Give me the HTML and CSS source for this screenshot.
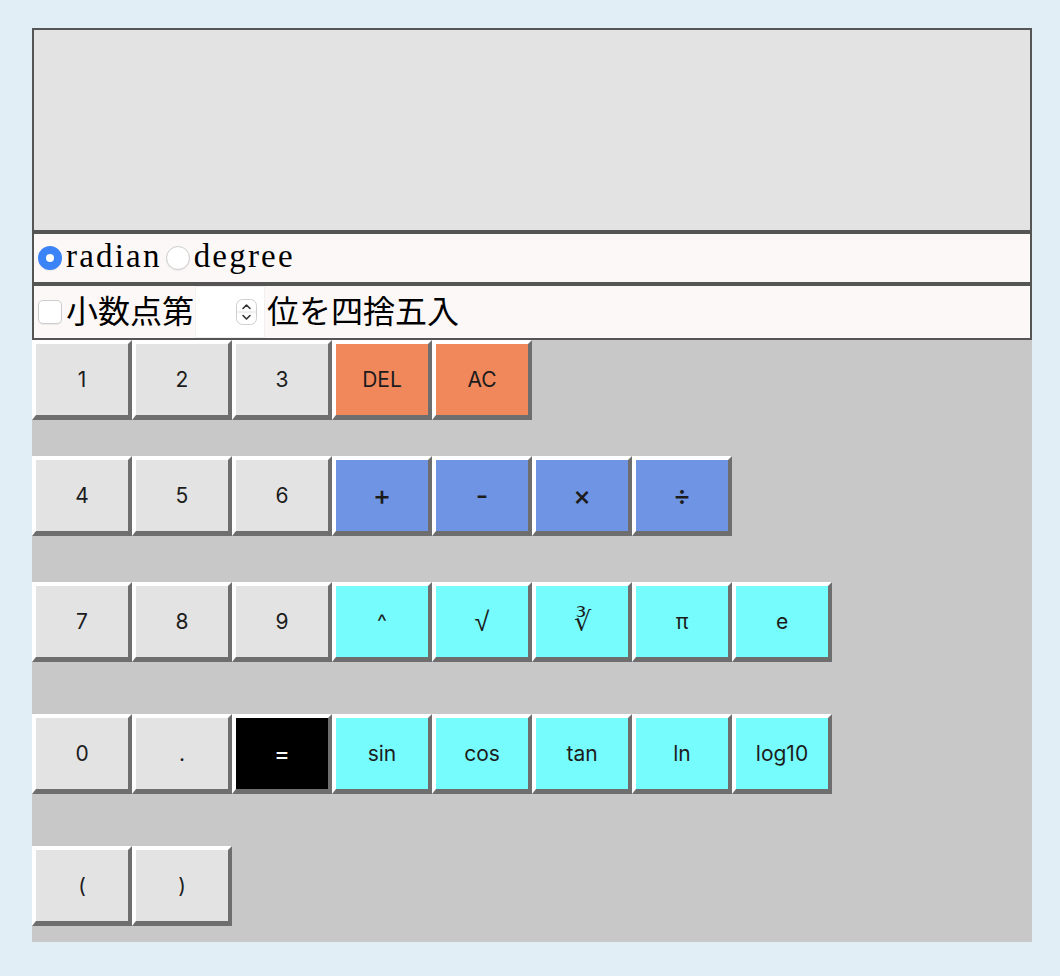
FILE: index.html
```html
<!DOCTYPE html>
<html lang="ja">
<head>
<meta charset="utf-8">
<title>関数電卓</title>
<link rel="stylesheet" href="styles.css">
</head>
<body>
<div class="calc">
  <div class="display"></div>
  <div class="opt-row mode">
    <label class="opt"><input type="radio" name="mode" class="radio" checked><span class="lt">radian</span></label>
    <label class="opt"><input type="radio" name="mode" class="radio"><span class="lt">degree</span></label>
  </div>
  <div class="opt-row round">
    <input type="checkbox" class="check">
    <span class="jp">小数点第</span>
    <span class="num">
      <input type="text" class="num-field" aria-label="桁数">
      <svg class="spin" width="21" height="26" viewBox="0 0 21 26">
        <rect x="0.5" y="0.5" width="20" height="25" rx="6" fill="#fff" stroke="#cfcfcf"/>
        <line x1="1" y1="13" x2="20" y2="13" stroke="#e2e2e2"/>
        <path d="M7 9.5 L10.5 6 L14 9.5" fill="none" stroke="#333" stroke-width="1.6" stroke-linecap="round" stroke-linejoin="round"/>
        <path d="M7 16.5 L10.5 20 L14 16.5" fill="none" stroke="#333" stroke-width="1.6" stroke-linecap="round" stroke-linejoin="round"/>
      </svg>
    </span>
    <span class="jp">位を四捨五入</span>
  </div>
  <div class="keys">
    <div class="key-row r1">
      <button class="key num-key">1</button><button class="key num-key">2</button><button class="key num-key">3</button><button class="key del">DEL</button><button class="key del">AC</button>
    </div>
    <div class="key-row r2">
      <button class="key num-key">4</button><button class="key num-key">5</button><button class="key num-key">6</button><button class="key op">+</button><button class="key op">-</button><button class="key op">×</button><button class="key op">÷</button>
    </div>
    <div class="key-row r3">
      <button class="key num-key">7</button><button class="key num-key">8</button><button class="key num-key">9</button><button class="key fn">^</button><button class="key fn sym">√</button><button class="key fn sym">∛</button><button class="key fn">π</button><button class="key fn">e</button>
    </div>
    <div class="key-row r4">
      <button class="key num-key">0</button><button class="key num-key">.</button><button class="key eq">=</button><button class="key fn">sin</button><button class="key fn">cos</button><button class="key fn">tan</button><button class="key fn">ln</button><button class="key fn">log10</button>
    </div>
    <div class="key-row r5">
      <button class="key num-key">(</button><button class="key num-key">)</button>
    </div>
  </div>
</div>
</body>
</html>
```

FILE: styles.css
```css
html, body {
  margin: 0;
  padding: 0;
  background: #e1eef6;
}

body {
  padding: 28px 28px 34px 32px;
  font-family: "Liberation Serif", "Noto Sans CJK JP", serif;
}

.calc {
  width: 1000px;
}

.display {
  box-sizing: border-box;
  height: 204px;
  border: 2px solid #555555;
  background: #e3e3e3;
}

.opt-row {
  box-sizing: border-box;
  display: flex;
  align-items: center;
  border: 2px solid #555555;
  background: #fcf8f7;
  font-size: 33px;
  color: #000;
}

.mode {
  height: 52px;
}

.round {
  height: 56px;
}

.opt {
  display: flex;
  align-items: center;
}

.lt {
  letter-spacing: 2.2px;
  position: relative;
  top: -2px;
}

.radio {
  appearance: none;
  -webkit-appearance: none;
  box-sizing: border-box;
  width: 24px;
  height: 24px;
  margin: 0 4px 0 4px;
  border-radius: 50%;
  border: 1px solid #cdcdcd;
  background: #ffffff;
  box-shadow: 0 1px 1px rgba(0,0,0,0.06);
}

.radio:checked {
  border: 8px solid #3b83f6;
  background: #ffffff;
}

.opt + .opt .radio {
  margin-left: 4px;
}

.check {
  appearance: none;
  -webkit-appearance: none;
  box-sizing: border-box;
  width: 24px;
  height: 24px;
  margin: 0 4px 0 4px;
  border-radius: 5px;
  border: 1px solid #cdcdcd;
  background: #ffffff;
  box-shadow: 0 1px 1px rgba(0,0,0,0.06);
}

.jp {
  font-family: "Noto Sans CJK JP", sans-serif;
  font-size: 32px;
  font-weight: 400;
  line-height: 1;
  position: relative;
  top: -3px;
}

.num {
  box-sizing: border-box;
  display: flex;
  align-items: center;
  width: 70px;
  height: 52px;
  margin: 0 2px 0 1px;
  background: #ffffff;
  border: 1px solid #f1efef;
}

.num-field {
  flex: 1;
  min-width: 0;
  height: 100%;
  border: none;
  padding: 0;
  outline: none;
  background: transparent;
  font-size: 20px;
}

.spin {
  display: block;
  margin-right: 7px;
}

.keys {
  background: #c8c8c8;
  padding-bottom: 16px;
}

.key-row {
  display: flex;
}

.r2 { margin-top: 36px; }
.r3 { margin-top: 46px; }
.r4 { margin-top: 52px; }
.r5 { margin-top: 52px; }

.key {
  box-sizing: border-box;
  width: 100px;
  height: 80px;
  margin: 0;
  padding: 0;
  border-style: solid;
  border-width: 4px 4px 5px 4px;
  border-color: #ffffff #6e6e6e #6e6e6e #ffffff;
  font-family: "Inter", "Liberation Sans", "DejaVu Sans", sans-serif;
  font-size: 21px;
  color: #1c1c1c;
  text-align: center;
  cursor: pointer;
}

.num-key { background: #e3e3e3; }
.del { background: #f0885c; }
.op { background: #6f94e4; font-size: 27px; font-weight: 500; }
.fn { background: #76fcfc; }
.sym { font-family: "DejaVu Sans", sans-serif; font-size: 27px; font-weight: 300; }
.eq { background: #000000; color: #ffffff; font-size: 24px; }
```
